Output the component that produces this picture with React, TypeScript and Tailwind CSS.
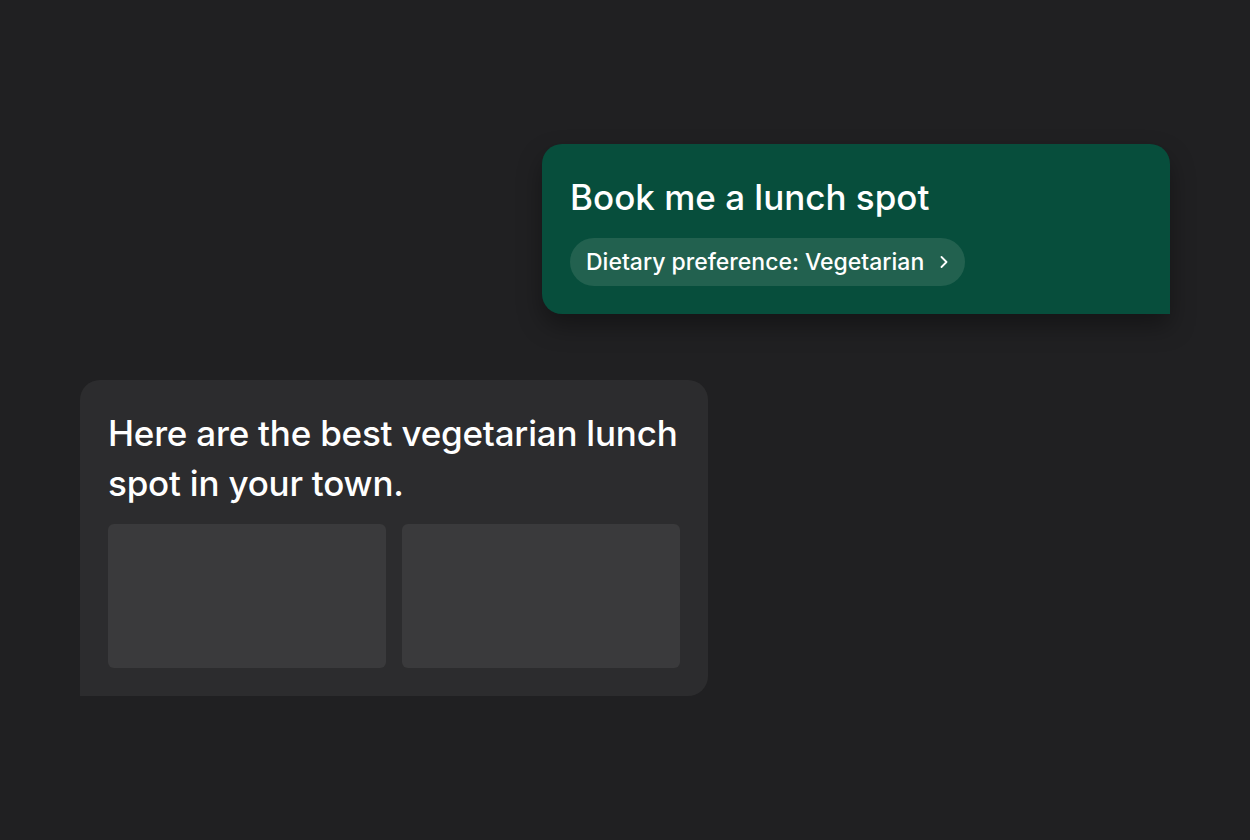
export default function App() {
  return (
    <main className="flex min-h-[840px] w-full flex-col bg-[#202022] font-['Inter',sans-serif] text-white">
      <UserBubble />
      <BotBubble />
    </main>
  );
}

const UserBubble = () => (
  <div className="ml-[542px] mt-[144px] w-[628px] rounded-[20px] rounded-br-none bg-[#074e3c] px-7 pb-7 pt-7 shadow-[0_12px_24px_rgba(0,0,0,0.35)]">
    <h2 className="whitespace-nowrap text-[35px] font-medium leading-[50px]">
      Book me a lunch spot
    </h2>
    <button className="mt-4 flex h-12 items-center rounded-full bg-[#22614f] pl-4 pr-[17px] text-[23px] font-medium">
      <span>Dietary preference: Vegetarian</span>
      <svg className="ml-[16px] h-[12px] w-[8px]" viewBox="0 0 8 12" fill="none">
        <path d="M1.5 1 6.5 6 1.5 11" stroke="white" strokeWidth="1.8" strokeLinecap="round" strokeLinejoin="round" />
      </svg>
    </button>
  </div>
);

const BotBubble = () => (
  <div className="ml-[80px] mt-[66px] w-[628px] rounded-[20px] rounded-bl-none bg-[#2c2c2e] px-7 pb-7 pt-7">
    <p className="whitespace-nowrap text-[35px] font-medium leading-[50px] tracking-[-0.006em]">
      Here are the best vegetarian lunch
      <br />
      spot in your town.
    </p>
    <div className="mt-4 grid grid-cols-2 gap-4">
      <div className="h-[144px] rounded-md bg-[#3a3a3c]" />
      <div className="h-[144px] rounded-md bg-[#3a3a3c]" />
    </div>
  </div>
);
